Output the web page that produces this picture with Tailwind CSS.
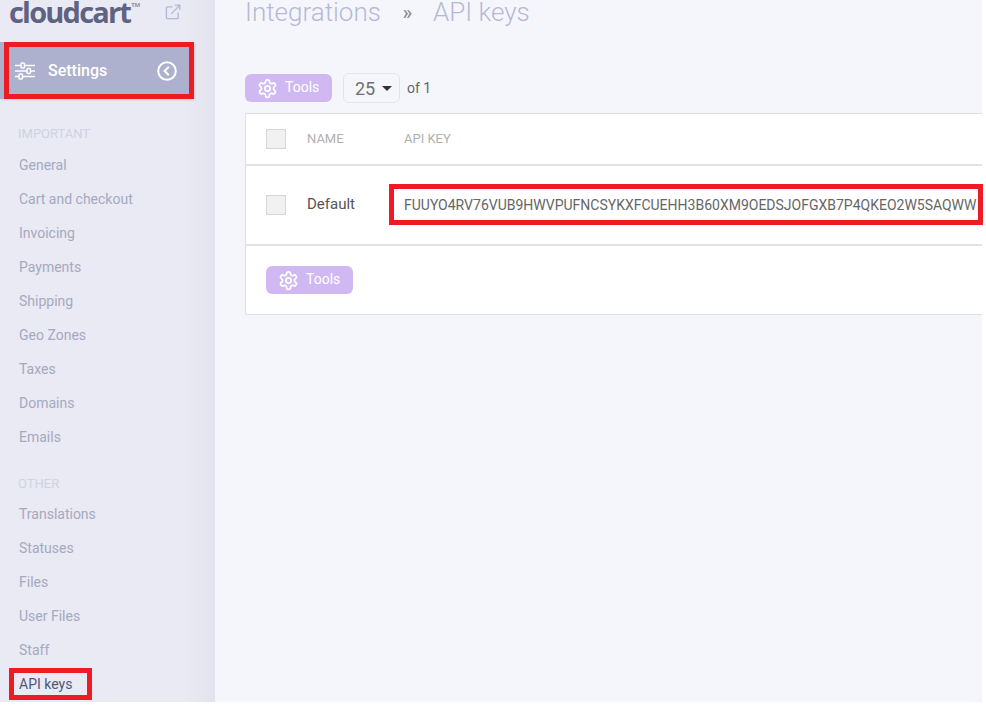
<!DOCTYPE html>
<html lang="en">
  <head>
    <meta charset="UTF-8" />
    <title>API keys</title>
    <script src="https://cdn.jsdelivr.net/npm/@tailwindcss/browser@4"></script>
  </head>
  <body class="bg-white font-['Roboto',sans-serif]">
    <div class="relative w-[982px] h-[702px]">
      <div class="flex w-[982px] h-[702px] overflow-hidden bg-[#f5f6fb]">
        <!-- sidebar -->
        <aside class="w-[215px] shrink-0 flex flex-col bg-gradient-to-r from-[#e9eaf3] from-[85%] to-[#e2e3ed]">
          <div class="h-[42px] pl-[9px] pr-[34px] flex items-start justify-between">
            <span class="flex items-start font-['Open_Sans',sans-serif] font-bold text-[29px] leading-[29px] -mt-[3px] tracking-[-1.8px] text-[#5f6282]">cloudcart<span class="text-[6px] leading-[6px] tracking-normal mt-[5px] ml-[1px] text-[#8a8da8]">TM</span></span>
            <svg class="mt-[4px]" width="16" height="16" viewBox="0 0 17 17" fill="none" stroke="#b4b8d6" stroke-width="1.4">
              <path d="M8 3H2.500A1 1 0 0 0 1.500 4v10.500a1 1 0 0 0 1 1H13a1 1 0 0 0 1-1V9" />
              <path d="M6.500 10.500 15.500 1.500M10.500 1.200h5.300v5.300" />
            </svg>
          </div>
          <div class="h-[57px] w-[194px] flex items-center bg-[#adb1cd] pl-[15px] pr-[17px] text-white shadow-[1px_1px_2px_rgba(0,0,0,0.12)]">
            <svg width="20" height="18" viewBox="0 0 20 18" fill="none" stroke="white" stroke-width="1.500">
              <path d="M0 3.500h6M10 3.500h10M0 9h12M16 9h4M0 14.500h4M8 14.500h12" />
              <rect x="6" y="1" width="3.500" height="5" rx="1" />
              <rect x="12" y="6.500" width="3.500" height="5" rx="1" />
              <rect x="4" y="12" width="3.500" height="5" rx="1" />
            </svg>
            <span class="ml-[13px] text-[16px] font-medium">Settings</span>
            <svg class="ml-auto" width="20" height="20" viewBox="0 0 20 20" fill="none" stroke="white" stroke-width="2">
              <circle cx="10" cy="10" r="8.800" />
              <path d="M11.800 5.800 7.600 10l4.200 4.200" />
            </svg>
          </div>
          <nav class="pl-[19px] flex flex-col text-[14px] text-[#a5a9c0]">
            <div class="mt-[27px] mb-[6px] h-[16px] leading-[16px] -ml-px text-[13px] text-[#d0d2e2]">IMPORTANT</div>
            <a class="h-[34px] leading-[34px]">General</a>
            <a class="h-[34px] leading-[34px]">Cart and checkout</a>
            <a class="h-[34px] leading-[34px]">Invoicing</a>
            <a class="h-[34px] leading-[34px]">Payments</a>
            <a class="h-[34px] leading-[34px]">Shipping</a>
            <a class="h-[34px] leading-[34px]">Geo Zones</a>
            <a class="h-[34px] leading-[34px]">Taxes</a>
            <a class="h-[34px] leading-[34px]">Domains</a>
            <a class="h-[34px] leading-[34px]">Emails</a>
            <div class="mt-[22px] mb-[5px] h-[16px] leading-[16px] -ml-px text-[13px] text-[#d0d2e2]">OTHER</div>
            <a class="h-[34px] leading-[34px]">Translations</a>
            <a class="h-[34px] leading-[34px]">Statuses</a>
            <a class="h-[34px] leading-[34px]">Files</a>
            <a class="h-[34px] leading-[34px]">User Files</a>
            <a class="h-[34px] leading-[34px]">Staff</a>
            <a class="h-[34px] leading-[34px] text-[#4f5775]">API keys</a>
          </nav>
        </aside>

        <!-- main -->
        <main class="flex-1 min-w-0 pl-[30px]">
          <div class="h-[24px] flex items-center text-[26px] leading-[24px] font-light text-[#b6b9d6]">
            <span>Integrations</span>
            <span class="w-[52px] pl-[1px] text-center text-[20px] font-medium text-[#8a8da8]">»</span>
            <span>API keys</span>
          </div>
          <div class="mt-[49px] h-[30px] flex items-center">
            <button class="w-[87px] h-[28px] flex items-center rounded-[6px] bg-[#d0b9f3] pl-[12px] text-[14px] text-white">
              <svg width="21" height="21" viewBox="0 0 24 24" fill="none" stroke="white" stroke-width="2" stroke-linecap="round" stroke-linejoin="round">
                <path d="M12.220 2h-.440a2 2 0 0 0-2 2v.180a2 2 0 0 1-1 1.730l-.430.250a2 2 0 0 1-2 0l-.150-.080a2 2 0 0 0-2.730.730l-.220.380a2 2 0 0 0 .730 2.730l.150.100a2 2 0 0 1 1 1.720v.510a2 2 0 0 1-1 1.740l-.150.090a2 2 0 0 0-.730 2.730l.220.380a2 2 0 0 0 2.730.730l.150-.080a2 2 0 0 1 2 0l.430.250a2 2 0 0 1 1 1.730V20a2 2 0 0 0 2 2h.440a2 2 0 0 0 2-2v-.180a2 2 0 0 1 1-1.730l.430-.250a2 2 0 0 1 2 0l.150.080a2 2 0 0 0 2.730-.730l.220-.390a2 2 0 0 0-.730-2.730l-.150-.080a2 2 0 0 1-1-1.740v-.500a2 2 0 0 1 1-1.740l.150-.090a2 2 0 0 0 .730-2.730l-.220-.380a2 2 0 0 0-2.730-.730l-.150.080a2 2 0 0 1-2 0l-.430-.250a2 2 0 0 1-1-1.730V4a2 2 0 0 0-2-2z" />
                <circle cx="12" cy="12" r="3" />
              </svg>
              <span class="ml-[7px] -mt-[2px]">Tools</span>
            </button>
            <div class="ml-[11px] w-[57px] h-[30px] flex items-center rounded-[6px] border border-[#e3e4ea] pl-[11px] text-[18px] text-[#707070]">
              25
              <span class="ml-[7px] w-0 h-0 border-x-[5px] border-x-transparent border-t-[5px] border-t-[#333]"></span>
            </div>
            <span class="ml-[7px] text-[14px] text-[#666]">of 1</span>
          </div>
          <div class="mt-[10px] h-[202px] border border-[#dfe0e3] border-r-0 bg-white">
            <div class="h-[52px] flex items-center border-b-2 border-[#e3e3e3] pl-[20px] text-[13px] text-[#b0b0b0]">
              <span class="w-[20px] h-[20px] bg-[#f1f1f1] border border-[#d6d6d6]"></span>
              <span class="ml-[21px] w-[97px]">NAME</span>
              <span>API KEY</span>
            </div>
            <div class="h-[80px] flex items-center border-b-2 border-[#e3e3e3] pl-[20px] text-[#555]">
              <span class="w-[20px] h-[20px] bg-[#f1f1f1] border border-[#d6d6d6]"></span>
              <span class="ml-[21px] w-[97px] -mt-[2px] text-[15px]">Default</span>
              <span class="text-[14px] whitespace-nowrap text-[#666]">FUUYO4RV76VUB9HWVPUFNCSYKXFCUEHH3B60XM9OEDSJOFGXB7P4QKEO2W5SAQWW</span>
            </div>
            <div class="pl-[20px] pt-[20px]">
              <button class="w-[87px] h-[28px] flex items-center rounded-[6px] bg-[#d0b9f3] pl-[12px] text-[14px] text-white">
                <svg width="21" height="21" viewBox="0 0 24 24" fill="none" stroke="white" stroke-width="2" stroke-linecap="round" stroke-linejoin="round">
                  <path d="M12.220 2h-.440a2 2 0 0 0-2 2v.180a2 2 0 0 1-1 1.730l-.430.250a2 2 0 0 1-2 0l-.150-.080a2 2 0 0 0-2.730.730l-.220.380a2 2 0 0 0 .730 2.730l.150.100a2 2 0 0 1 1 1.720v.510a2 2 0 0 1-1 1.740l-.150.090a2 2 0 0 0-.730 2.730l.220.380a2 2 0 0 0 2.730.730l.150-.080a2 2 0 0 1 2 0l.430.250a2 2 0 0 1 1 1.730V20a2 2 0 0 0 2 2h.440a2 2 0 0 0 2-2v-.180a2 2 0 0 1 1-1.730l.430-.250a2 2 0 0 1 2 0l.150.080a2 2 0 0 0 2.730-.730l.220-.390a2 2 0 0 0-.730-2.730l-.150-.080a2 2 0 0 1-1-1.740v-.500a2 2 0 0 1 1-1.740l.150-.090a2 2 0 0 0 .730-2.730l-.220-.380a2 2 0 0 0-2.730-.730l-.150.080a2 2 0 0 1-2 0l-.430-.250a2 2 0 0 1-1-1.730V4a2 2 0 0 0-2-2z" />
                  <circle cx="12" cy="12" r="3" />
                </svg>
                <span class="ml-[7px] -mt-[2px]">Tools</span>
              </button>
            </div>
          </div>
        </main>
      </div>

      <!-- red annotation boxes drawn over the screenshot -->
      <div class="absolute left-[4px] top-[42px] w-[190px] h-[57px] border-[5px] border-[#ed1c24]"></div>
      <div class="absolute left-[9px] top-[668px] w-[83px] h-[32px] border-[5px] border-[#ed1c24]"></div>
      <div class="absolute left-[389px] top-[184px] w-[594px] h-[41px] border-[5px] border-[#ed1c24]"></div>
    </div>
  </body>
</html>
